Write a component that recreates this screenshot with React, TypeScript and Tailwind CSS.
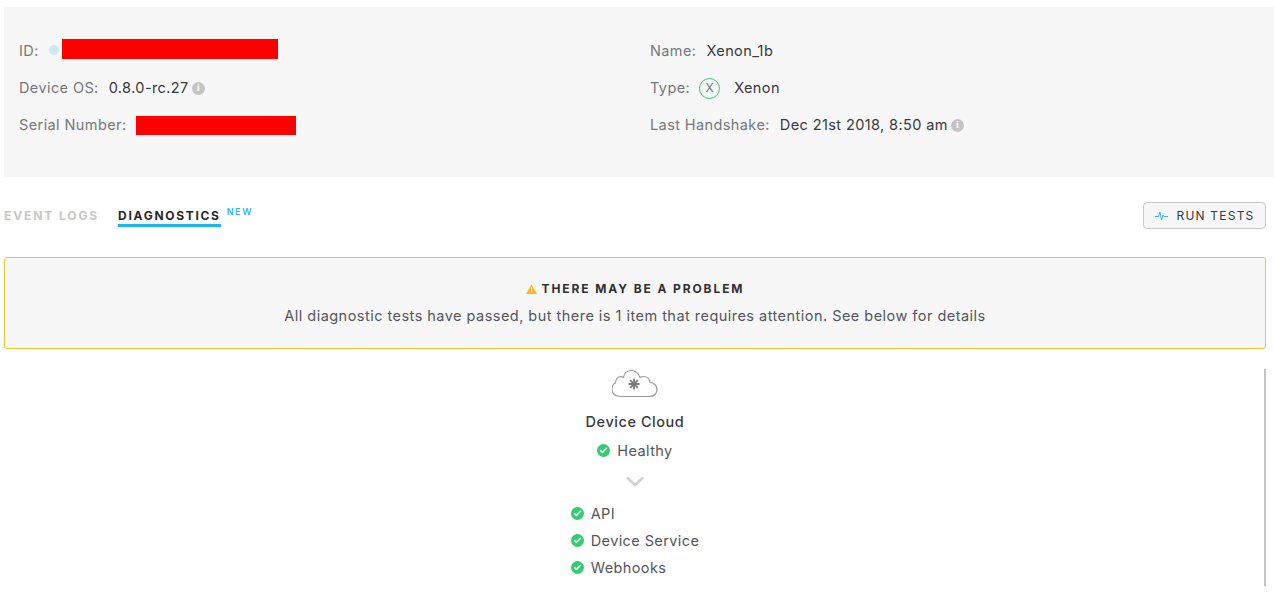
import { Check } from "lucide-react";

const font = "font-['Inter','Liberation_Sans',sans-serif]";

function InfoDot() {
  return (
    <span className="ml-[3px] flex h-[13px] w-[13px] items-center justify-center rounded-full bg-[#c4c4c4] font-['Liberation_Serif',serif] text-[10px] font-bold leading-none tracking-normal text-white">
      i
    </span>
  );
}

function Redacted({ className }: { className: string }) {
  return <div className={`bg-[#ff0000] ${className}`} />;
}

function Row({ label, children }: { label: string; children: React.ReactNode }) {
  return (
    <div className="flex h-[37px] items-center">
      <span className="mr-[10px] text-[#76777a]">{label}</span>
      {children}
    </div>
  );
}

function HealthItem({ label }: { label: string }) {
  return (
    <div className="flex h-[27px] items-center gap-[7px]">
      <span className="flex h-[13px] w-[13px] items-center justify-center rounded-full bg-[#2fce71]">
        <Check size={9} strokeWidth={4} className="text-white" />
      </span>
      <span className="text-[#53565c]">{label}</span>
    </div>
  );
}

export default function App() {
  return (
    <div className={`${font} h-[597px] w-[1274px] overflow-hidden bg-white pl-1 pt-[7px] text-[14.5px] tracking-[0.4px] text-[#36393d]`}>
      {/* DEVICE INFO */}
      <div className="flex h-[170px] items-center bg-[#f7f7f7] pb-2 pl-[15px]">
        <div className="w-[631px]">
          <Row label="ID:">
            <span className="mb-[2px] mr-[3px] h-[10px] w-[10px] rounded-full bg-[#cde7f5]" />
            <Redacted className="mb-1 h-5 w-[216px]" />
          </Row>
          <Row label="Device OS:">
            <span>0.8.0-rc.27</span>
            <InfoDot />
          </Row>
          <Row label="Serial Number:">
            <Redacted className="h-[19px] w-[160px]" />
          </Row>
        </div>
        <div>
          <Row label="Name:">
            <span>Xenon_1b</span>
          </Row>
          <Row label="Type:">
            <span className="-ml-px mr-[14px] flex h-[21px] w-[21px] items-center justify-center rounded-full border border-[#2fce71] text-[12px] tracking-normal text-[#76777a]">
              X
            </span>
            <span>Xenon</span>
          </Row>
          <Row label="Last Handshake:">
            <span>Dec 21st 2018, 8:50 am</span>
            <InfoDot />
          </Row>
        </div>
      </div>

      {/* TABS */}
      <div className="mr-2 mt-[25px] flex h-[27px] items-start justify-between">
        <div className="flex items-start text-[12px] font-bold leading-4">
          <span className="mt-[6px] tracking-[1.9px] text-[#c8c8c8]">EVENT LOGS</span>
          <span className="ml-[19px] mt-[6px] h-[19px] border-b-[3px] border-[#1cb5f0] tracking-[1.7px] text-[#26282b]">DIAGNOSTICS</span>
          <span className="ml-[6px] mt-[4px] text-[9px] font-semibold leading-3 tracking-[1.6px] text-[#35b4ef]">NEW</span>
        </div>
        <button className="flex h-[27px] w-[123px] items-center justify-center gap-[9px] rounded border border-[#c8c8c8] bg-[#f7f7f7] text-[12px] tracking-[1.2px] text-[#36393d]">
          <svg width="13" height="10" viewBox="0 0 13 10" fill="none" stroke="#35b4ef" strokeWidth="1">
            <path d="M0 5.5h3.5L5 1l1.500 8L8 4l1 1.500h4" />
          </svg>
          RUN TESTS
        </button>
      </div>

      {/* BANNER */}
      <div className="mr-2 mt-[28px] flex h-[92px] flex-col items-center rounded-[3px] border border-[#f2c230] bg-[#f7f7f7] pt-[23px]">
        <div className="flex h-[16px] items-center gap-[5px] text-[12px] font-bold tracking-[1.9px] text-[#2f3135]">
          <svg width="11" height="10" viewBox="0 0 11 10">
            <path d="M5.5 0.5 11 10H0z" fill="#f5b923" />
            <path d="M5 3.5h1v3H5zM5 7.300h1v1H5z" fill="#fff" />
          </svg>
          THERE MAY BE A PROBLEM
        </div>
        <p className="mt-[10px] leading-[18px] tracking-[0.47px] text-[#53565c]">
          All diagnostic tests have passed, but there is 1 item that requires attention. See below for details
        </p>
      </div>

      {/* DIAGNOSTIC TREE */}
      <div className="mr-2 mt-5 flex h-[217px] justify-center border-r-2 border-[#c4c4c4] pl-[2px]">
        <div className="flex flex-col items-center">
          <svg width="46" height="28" viewBox="0 0 46 28" fill="none" stroke="#9a9b9e" strokeWidth="1.2">
            <path d="M8 27.500h30c4 0 7-3 7-7s-3-7-7-7c-.5-4-3-6-6.500-6-1.500 0-2.500.4-3.500 1-1.500-4-4.500-7-9-7-4 0-7 3-7.500 7-1-.7-2-1-3-.8-3 .3-5 3-5 6.300-2.500 1-3.500 3.500-3.500 6.500 0 4 3 6.500 6.500 6.500z" />
            <g stroke="#7a7c7f" strokeWidth="1.8">
              <path d="M22 9.500v11M16.500 15h11M18.200 11.200l7.600 7.600M25.800 11.200l-7.600 7.600" />
            </g>
          </svg>
          <div className="mt-[17px] font-medium leading-4 tracking-[0.55px] text-[#36393d]">Device Cloud</div>
          <div className="mt-[7px]">
            <HealthItem label="Healthy" />
          </div>
          <svg className="mt-3" width="18" height="11" viewBox="0 0 18 11" fill="none" stroke="#cfd0d2" strokeWidth="2.5">
            <path d="M1 1.500l8 7.500 8-7.500" />
          </svg>
          <div className="mt-[13px] self-start">
            <HealthItem label="API" />
            <HealthItem label="Device Service" />
            <HealthItem label="Webhooks" />
          </div>
        </div>
      </div>
    </div>
  );
}
